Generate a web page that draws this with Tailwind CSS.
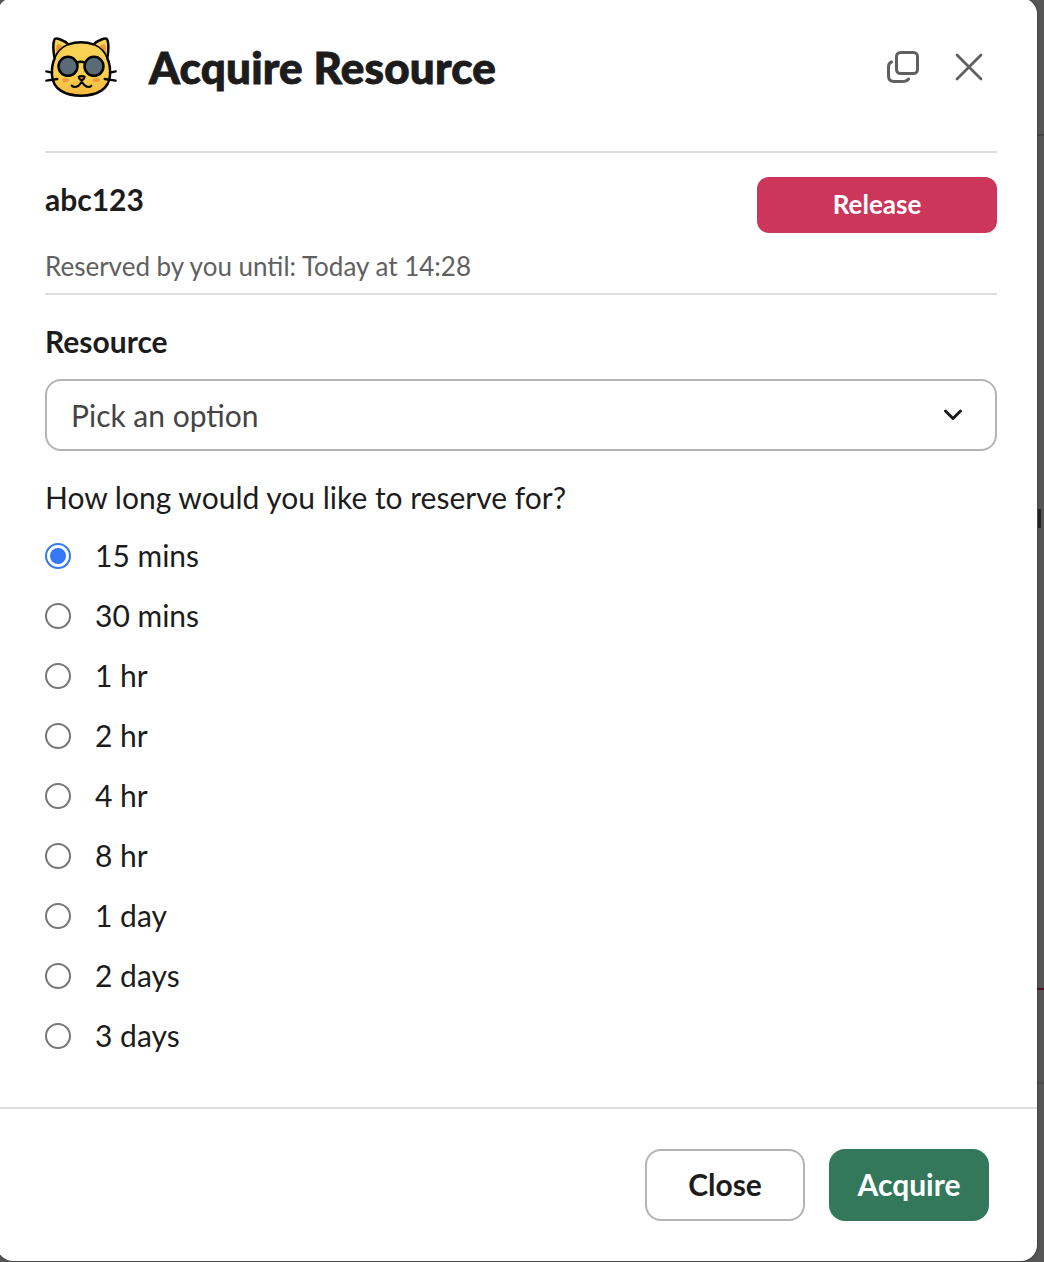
<!DOCTYPE html>
<html lang="en">
<head>
<meta charset="utf-8">
<title>Acquire Resource</title>
<script src="https://cdn.jsdelivr.net/npm/@tailwindcss/browser@4"></script>
</head>
<body class="relative h-[1262px] w-[1044px] overflow-hidden bg-[#565656] font-['Lato',sans-serif] text-[30px] leading-[44px] text-[#1d1c1d]">
  <!-- dimmed page behind the dialog -->
  <div class="absolute top-[134px] right-0 h-[2px] w-[10px] bg-[#464646]"></div>
  <div class="absolute top-[509px] left-[1038px] h-[19px] w-[3px] bg-[#222326]"></div>
  <div class="absolute top-[988px] right-0 h-[2px] w-[10px] bg-[#4f0f24]"></div>
  <div class="absolute top-[1082px] right-0 h-[2px] w-[10px] bg-[#4c4c4c]"></div>

  <section class="relative -mt-[2px] -ml-[3px] flex h-[1263px] w-[1040px] flex-col rounded-[16px] bg-white pt-[2px] pl-[3px] shadow-[0_0_3px_rgba(0,0,0,0.4)]">
    <header class="flex h-[151px] shrink-0 items-start px-[45px] pt-[37px]">
      <svg class="h-[60px] w-[72px] shrink-0" viewBox="27 27 216 180" fill="none" stroke="#050505" stroke-width="7.500" stroke-linecap="round" stroke-linejoin="round">
        <defs>
          <linearGradient id="fur" x1="0" y1="0" x2="0" y2="1"><stop offset="0" stop-color="#f6d35a"/><stop offset=".65" stop-color="#fad04c"/><stop offset="1" stop-color="#f5b840"/></linearGradient>
        </defs>
        <path d="M56 91C51 67 51 46 55 35C58 26 86 38 97 49Q134 37 173 49C184 38 211 26 214 35C218 46 218 67 214 91C221 105 223 123 222 142C219 183 184 203 135 203C86 203 51 183 48 142C47 123 49 105 56 91Z" fill="url(#fur)"/>
        <path d="M61 77C60 62 61 51 64 49C67 47 76 52 81 56C73 61 66 68 61 77ZM209 77C210 62 209 51 206 49C203 47 194 52 189 56C197 61 204 68 209 77Z" fill="#ee9632" stroke="none"/>
        <path d="M56 91Q66 63 97 49M214 91Q204 63 173 49" stroke-width="5"/>
        <ellipse cx="89" cy="156" rx="11" ry="6" fill="#f09a42" stroke="none"/>
        <ellipse cx="181" cy="156" rx="11" ry="6" fill="#f09a42" stroke="none"/>
        <path d="M122 105Q134 98 148 105"/>
        <circle cx="96" cy="115" r="28.500" fill="#5a6b78"/>
        <circle cx="174" cy="115" r="28.500" fill="#5a6b78"/>
        <path d="M107 173Q116 181 128 173L137 162L147 173Q158 181 166 173" stroke-width="6.500"/>
        <path d="M128 146Q137 142 146 146Q144 155 137 157Q130 155 128 146Z" fill="#d98022" stroke-width="6"/>
        <path d="M31 130L48 134M31 158L64 153M239 130L222 134M239 158L206 153" stroke-width="7"/>
      </svg>
      <h1 class="-mt-[1px] ml-[32px] h-[62px] grow text-[44px] leading-[62px] font-black tracking-[0.2px] [-webkit-text-stroke:0.9px_#1d1c1d]">Acquire Resource</h1>
      <button class="mt-[12px] mr-[32px] h-[36px] w-[36px]" aria-label="Open in new window">
        <svg class="h-[36px] w-[36px]" viewBox="0 0 36 36" fill="none" stroke="#616061" stroke-width="3" stroke-linecap="round" stroke-linejoin="round">
          <rect x="11.5" y="3.5" width="21" height="21" rx="4"/>
          <path d="M6.5 13Q3.5 14 3.5 18V27Q3.5 32.500 9 32.500H17Q22 32.500 23.500 30"/>
        </svg>
      </button>
      <button class="mt-[14px] mr-[7px] h-[32px] w-[32px]" aria-label="Close">
        <svg class="h-[32px] w-[32px]" viewBox="0 0 32 32" fill="none" stroke="#616061" stroke-width="2.800" stroke-linecap="round"><path d="M4 4L28 28M28 4L4 28"/></svg>
      </button>
    </header>

    <main class="h-[956px] shrink-0 pr-[40px] pl-[45px]">
      <div class="h-[2px] bg-[#dddddd]"></div>
      <div class="flex h-[90px] justify-between pt-[24px]">
        <h2 class="font-bold">abc123</h2>
        <button class="h-[56px] w-[240px] rounded-[12px] bg-[#cd365b] pb-[2px] text-[26px] leading-[54px] font-bold text-white">Release</button>
      </div>
      <p class="h-[50px] pt-[1px] text-[26px] text-[#616061]">Reserved by you until: Today at 14:28</p>
      <div class="h-[2px] bg-[#dddddd]"></div>
      <h3 class="mt-[24px] font-bold">Resource</h3>
      <button class="mt-[16px] flex h-[72px] w-full items-center justify-between rounded-[16px] border-2 border-[#b4b4b5] pr-[30px] pl-[24px] text-left text-[#454447]">
        <span>Pick an option</span>
        <svg class="h-[24px] w-[24px]" viewBox="0 0 24 24" fill="none" stroke="#1d1c1d" stroke-width="3" stroke-linecap="round" stroke-linejoin="round"><path d="M4.500 8L12 15.500L19.500 8"/></svg>
      </button>
      <div class="pt-[24px]" role="radiogroup">
        <p class="h-[50px]">How long would you like to reserve for?</p>
        <div class="flex flex-col gap-[16px] pt-[8px]">
          <label class="flex h-[44px] items-center gap-[24px]"><span class="mt-[2px] flex h-[26px] w-[26px] items-center justify-center rounded-full border-2 border-[#3478f6]"><span class="h-[16px] w-[16px] rounded-full bg-[#3478f6]"></span></span>15 mins</label>
          <label class="flex h-[44px] items-center gap-[24px]"><span class="mt-[2px] h-[26px] w-[26px] rounded-full border-2 border-[#777777]"></span>30 mins</label>
          <label class="flex h-[44px] items-center gap-[24px]"><span class="mt-[2px] h-[26px] w-[26px] rounded-full border-2 border-[#777777]"></span>1 hr</label>
          <label class="flex h-[44px] items-center gap-[24px]"><span class="mt-[2px] h-[26px] w-[26px] rounded-full border-2 border-[#777777]"></span>2 hr</label>
          <label class="flex h-[44px] items-center gap-[24px]"><span class="mt-[2px] h-[26px] w-[26px] rounded-full border-2 border-[#777777]"></span>4 hr</label>
          <label class="flex h-[44px] items-center gap-[24px]"><span class="mt-[2px] h-[26px] w-[26px] rounded-full border-2 border-[#777777]"></span>8 hr</label>
          <label class="flex h-[44px] items-center gap-[24px]"><span class="mt-[2px] h-[26px] w-[26px] rounded-full border-2 border-[#777777]"></span>1 day</label>
          <label class="flex h-[44px] items-center gap-[24px]"><span class="mt-[2px] h-[26px] w-[26px] rounded-full border-2 border-[#777777]"></span>2 days</label>
          <label class="flex h-[44px] items-center gap-[24px]"><span class="mt-[2px] h-[26px] w-[26px] rounded-full border-2 border-[#777777]"></span>3 days</label>
        </div>
      </div>
    </main>

    <footer class="flex grow justify-end gap-[24px] border-t-2 border-[#dddddd] pt-[40px] pr-[48px]">
      <button class="h-[72px] w-[160px] rounded-[16px] border-2 border-[#b4b4b5] pb-[2px] font-bold">Close</button>
      <button class="h-[72px] w-[160px] rounded-[16px] bg-[#34785c] pb-[2px] font-bold text-white">Acquire</button>
    </footer>
  </section>
</body>
</html>
